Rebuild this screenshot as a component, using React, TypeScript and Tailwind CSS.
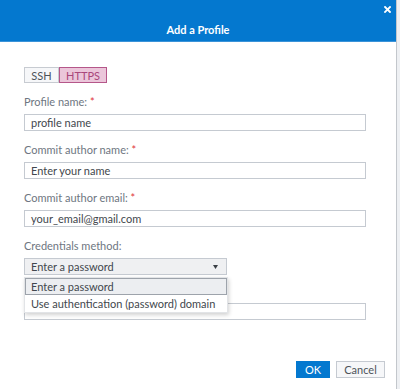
import React from "react";

const font = { fontFamily: "Lato, 'Open Sans', sans-serif" };

function Label({ text, required }: { text: string; required?: boolean }) {
  return (
    <div className="h-[14px] leading-[14px] text-[11px] text-[#6e7681] mb-[5px] whitespace-nowrap">
      {text}
      {required && <span className="text-[#e0333a]"> *</span>}
    </div>
  );
}

function Input({ value }: { value: string }) {
  return (
    <div className="w-[342px] h-[17px] border border-[#c5cad1] bg-white flex items-center px-[6px] text-[11px] text-[#42474d] leading-none">
      {value}
    </div>
  );
}

export default function App() {
  return (
    <div className="w-[400px] h-[389px] flex bg-[#eef0f3] overflow-hidden" style={font}>
      <div className="w-[397px] h-full bg-white border-r border-[#c3c7cc] flex flex-col">
        <div className="h-[42px] bg-[#0478cf] relative flex justify-center shrink-0 border-b border-[#3b93d8]">
          <div className="mt-[22px] text-white text-[11px] font-bold leading-[16px]">Add a Profile</div>
          <svg className="absolute right-[5px] top-[6px]" width="7" height="7" viewBox="0 0 7 7">
            <path d="M1 1 L6 6 M6 1 L1 6" stroke="white" strokeWidth="1.8" strokeLinecap="square" />
          </svg>
        </div>
        <div className="flex-1 flex flex-col px-[24px] pt-[25px] relative">
          <div className="flex h-[16px] text-[11px] leading-none">
            <div className="w-[35px] h-full border border-[#c7cbd1] bg-[#f6f7f9] text-[#4d535a] flex items-center justify-center">SSH</div>
            <div className="w-[48px] h-full border border-[#b5578a] bg-[#ebc6da] text-[#a9477b] flex items-center justify-center">HTTPS</div>
          </div>
          <div className="mt-[12px]">
            <Label text="Profile name:" required />
            <Input value="profile name" />
          </div>
          <div className="mt-[12px]">
            <Label text="Commit author name:" required />
            <Input value="Enter your name" />
          </div>
          <div className="mt-[12px]">
            <Label text="Commit author email:" required />
            <Input value="your_email@gmail.com" />
          </div>
          <div className="mt-[12px] relative">
            <Label text="Credentials method:" />
            <div className="w-[203px] h-[17px] border border-[#c5cad1] bg-[#eff0f2] flex items-center justify-between px-[6px] text-[11px] text-[#42474d] leading-none">
              <span>Enter a password</span>
              <svg width="5" height="4" viewBox="0 0 5 4" className="mr-[2px]">
                <path d="M0 0 L5 0 L2.5 4 Z" fill="#3a3f45" />
              </svg>
            </div>
            <div className="mt-[9px]">
              <div className="h-[19px]" />
              <Input value="" />
            </div>
            <div className="absolute left-0 top-[38px] w-[204px] bg-white shadow-[1px_2px_4px_rgba(0,0,0,0.18)] border border-[#e2e4e7] text-[11px] text-[#42474d] leading-none">
              <div className="h-[17px] border border-[#9da3ab] bg-[#eceef1] flex items-center px-[5px]">Enter a password</div>
              <div className="h-[17px] flex items-center px-[6px]">Use authentication (password) domain</div>
            </div>
          </div>
          <div className="mt-auto mb-[11px] mr-[-13px] flex justify-end gap-[6px] text-[11px] leading-none">
            <div className="w-[34px] h-[17px] bg-[#0478cf] text-white flex items-center justify-center">OK</div>
            <div className="w-[49px] h-[17px] border border-[#c5cad1] bg-[#f6f7f9] text-[#4d535a] flex items-center justify-center">Cancel</div>
          </div>
        </div>
      </div>
    </div>
  );
}
